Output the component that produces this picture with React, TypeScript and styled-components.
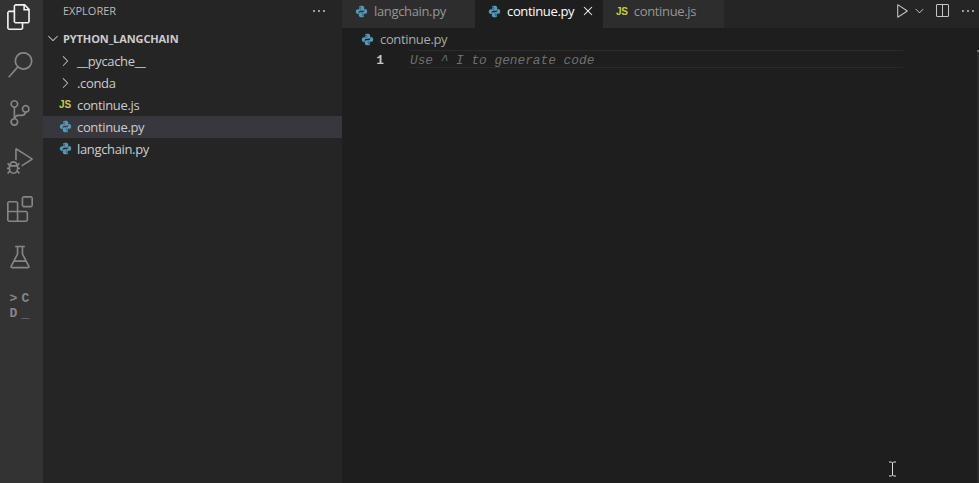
import React from "react";
import styled, { createGlobalStyle } from "styled-components";
import {
  VscFiles,
  VscSearch,
  VscSourceControl,
  VscDebugAlt,
  VscExtensions,
  VscBeaker,
  VscEllipsis,
  VscChevronRight,
  VscChevronDown,
  VscClose,
  VscPlay,
  VscSplitHorizontal,
} from "react-icons/vsc";

const GlobalStyle = createGlobalStyle`
  html, body {
    margin: 0;
    padding: 0;
    height: 100%;
    background: #1e1e1e;
    overflow: hidden;
  }
  #root {
    height: 100%;
  }
  * {
    box-sizing: border-box;
  }
`;

const Workbench = styled.div`
  display: flex;
  position: relative;
  width: 979px;
  height: 483px;
  overflow: hidden;
  font-family: "Open Sans", "Noto Sans", sans-serif;
  color: #cccccc;
`;

const ActivityBar = styled.nav`
  display: flex;
  flex-direction: column;
  align-items: center;
  flex: 0 0 43px;
  width: 43px;
  background: #333333;
`;

const ActivityItem = styled.div<{ $active?: boolean }>`
  display: flex;
  align-items: center;
  justify-content: center;
  width: 43px;
  height: 48px;
  padding-right: 4px;
  color: ${(props) => (props.$active ? "#f2f2f2" : "#868686")};
  font-size: 26px;

  &:first-child {
    height: 41px;
    padding: 0 6px 7px 0;
  }
`;

const TestingGlyph = styled.div`
  display: grid;
  grid-template-columns: 12px 12px;
  grid-template-rows: 15px 15px;
  justify-items: center;
  margin-top: 1px;
  font-family: "Liberation Mono", monospace;
  font-size: 13px;
  font-weight: 700;
  line-height: 15px;
  color: #868686;

  span {
    display: block;
  }
`;

const Sidebar = styled.aside`
  display: flex;
  flex-direction: column;
  flex: 0 0 299px;
  width: 299px;
  background: #252526;
`;

const SidebarHeader = styled.div`
  display: flex;
  align-items: center;
  justify-content: space-between;
  height: 22px;
  padding: 0 15px 1px 20px;
  font-size: 11px;
  color: #bbbbbb;
`;

const HeaderMenu = styled.span`
  display: flex;
  font-size: 16px;
  color: #c5c5c5;
`;

const FolderTitle = styled.div`
  display: flex;
  align-items: center;
  height: 22px;
  margin-top: 6px;
  padding: 0 0 2px 2px;
  gap: 2px;
  font-size: 11px;
  font-weight: 700;
  letter-spacing: -0.1px;
  color: #cccccc;

  svg {
    font-size: 16px;
    flex: none;
  }
`;

const TreeRow = styled.div<{ $selected?: boolean }>`
  display: flex;
  align-items: center;
  height: 22px;
  padding: 0 0 1px 14px;
  font-size: 13px;
  letter-spacing: -0.35px;
  color: #cccccc;
  background: ${(props) => (props.$selected ? "#37373d" : "transparent")};
`;

const TreeIcon = styled.span`
  display: flex;
  align-items: center;
  justify-content: center;
  flex: 0 0 16px;
  width: 16px;
  margin-right: 4px;
  font-size: 16px;
  color: #c5c5c5;
`;

const JsBadge = styled.span`
  font-family: "Liberation Sans", sans-serif;
  font-size: 10px;
  font-weight: 700;
  letter-spacing: -0.2px;
  color: #cbcb41;
`;

const Editor = styled.main`
  display: flex;
  flex-direction: column;
  flex: 1;
  min-width: 0;
  background: #1e1e1e;
`;

const TabBar = styled.div`
  display: flex;
  align-items: stretch;
  height: 28px;
  background: #252526;
`;

const Tab = styled.div<{ $active?: boolean; $width: number }>`
  display: flex;
  align-items: center;
  flex: 0 0 ${(props) => props.$width}px;
  padding: 0 0 6px 13px;
  gap: 6px;
  font-size: 13px;
  letter-spacing: -0.35px;
  color: ${(props) => (props.$active ? "#ffffff" : "#969696")};
  background: ${(props) => (props.$active ? "#1e1e1e" : "#2d2d2d")};
`;

const TabClose = styled.span`
  display: flex;
  font-size: 16px;
  color: #f0f0f0;
`;

const TabActions = styled.div`
  display: flex;
  align-items: center;
  margin-left: auto;
  padding: 0 3px 7px 0;
  color: #c5c5c5;
`;

const ActionIcon = styled.span<{ $size: number; $gap?: number }>`
  display: flex;
  margin-left: ${(props) => props.$gap ?? 0}px;
  font-size: ${(props) => props.$size}px;
`;

const Breadcrumb = styled.div`
  display: flex;
  align-items: center;
  height: 22px;
  padding-left: 19px;
  gap: 6px;
  font-size: 13px;
  letter-spacing: -0.35px;
  color: #a9a9a9;
`;

const CodeLine = styled.div`
  display: flex;
  align-items: center;
  height: 18px;
  font-family: "Liberation Mono", monospace;
  font-size: 12.8px;
`;

const LineNumber = styled.span`
  flex: 0 0 42px;
  padding-top: 2px;
  text-align: right;
  color: #c6c6c6;
  font-weight: 700;
`;

const LineContent = styled.div`
  display: flex;
  align-items: center;
  width: 494px;
  height: 18px;
  margin-left: 25px;
  padding: 2px 0 0 1px;
  border-top: 1px solid #2b2b2b;
  border-bottom: 1px solid #2b2b2b;
  font-style: italic;
  color: #6f6f6f;
`;

const OverviewRuler = styled.div`
  position: absolute;
  top: 50px;
  right: 0;
  bottom: 0;
  width: 2px;
  background: #2a2a2a;
  border-top: 2px solid #6e6e6e;
`;

const MouseCursor = styled.svg`
  position: absolute;
  left: 888px;
  top: 461px;
`;

function PythonIcon({ size = 13 }: { size?: number }) {
  return (
    <svg width={size} height={size} viewBox="0 0 16 16" fill="#519aba">
      <path d="M7.6 1C5 1 4.9 2.2 4.9 2.9v1.6H8v.6H3.4C2 5.1 1 6.2 1 8s1 3 2.3 3h1.2V9.4c0-1.2 1-2.2 2.2-2.2h2.8c1 0 1.8-.8 1.8-1.8V2.900C11.300 1.800 10 1 7.600 1zM6.200 2.300a.7.7 0 1 1 0 1.400.7.7 0 0 1 0-1.400z" />
      <path d="M8.400 15c2.600 0 2.700-1.200 2.700-1.900v-1.600H8v-.6h4.600C14 10.900 15 9.800 15 8s-1-3-2.300-3h-1.200v1.600c0 1.200-1 2.200-2.200 2.200H6.500c-1 0-1.800.8-1.800 1.800v2.500C4.700 14.200 6 15 8.400 15zm1.400-1.300a.7.7 0 1 1 0-1.400.7.7 0 0 1 0 1.400z" />
    </svg>
  );
}

export default function App() {
  return (
    <>
      <GlobalStyle />
      <Workbench>
        <ActivityBar>
          <ActivityItem $active>
            <VscFiles />
          </ActivityItem>
          <ActivityItem>
            <VscSearch />
          </ActivityItem>
          <ActivityItem>
            <VscSourceControl />
          </ActivityItem>
          <ActivityItem>
            <VscDebugAlt />
          </ActivityItem>
          <ActivityItem>
            <VscExtensions />
          </ActivityItem>
          <ActivityItem>
            <VscBeaker />
          </ActivityItem>
          <ActivityItem>
            <TestingGlyph>
              <span>&gt;</span>
              <span>C</span>
              <span>D</span>
              <span>_</span>
            </TestingGlyph>
          </ActivityItem>
        </ActivityBar>

        <Sidebar>
          <SidebarHeader>
            <span>EXPLORER</span>
            <HeaderMenu>
              <VscEllipsis />
            </HeaderMenu>
          </SidebarHeader>
          <FolderTitle>
            <VscChevronDown />
            <span>PYTHON_LANGCHAIN</span>
          </FolderTitle>
          <TreeRow>
            <TreeIcon>
              <VscChevronRight />
            </TreeIcon>
            <span>__pycache__</span>
          </TreeRow>
          <TreeRow>
            <TreeIcon>
              <VscChevronRight />
            </TreeIcon>
            <span>.conda</span>
          </TreeRow>
          <TreeRow>
            <TreeIcon>
              <JsBadge>JS</JsBadge>
            </TreeIcon>
            <span>continue.js</span>
          </TreeRow>
          <TreeRow $selected>
            <TreeIcon>
              <PythonIcon />
            </TreeIcon>
            <span>continue.py</span>
          </TreeRow>
          <TreeRow>
            <TreeIcon>
              <PythonIcon />
            </TreeIcon>
            <span>langchain.py</span>
          </TreeRow>
        </Sidebar>

        <Editor>
          <TabBar>
            <Tab $width={133}>
              <PythonIcon />
              <span>langchain.py</span>
            </Tab>
            <Tab $active $width={128}>
              <PythonIcon />
              <span>continue.py</span>
              <TabClose>
                <VscClose />
              </TabClose>
            </Tab>
            <Tab $width={121}>
              <JsBadge>JS</JsBadge>
              <span>continue.js</span>
            </Tab>
            <TabActions>
              <ActionIcon $size={17}>
                <VscPlay />
              </ActionIcon>
              <ActionIcon $size={13} $gap={2}>
                <VscChevronDown />
              </ActionIcon>
              <ActionIcon $size={16} $gap={8}>
                <VscSplitHorizontal />
              </ActionIcon>
              <ActionIcon $size={16} $gap={10}>
                <VscEllipsis />
              </ActionIcon>
            </TabActions>
          </TabBar>
          <Breadcrumb>
            <PythonIcon />
            <span>continue.py</span>
          </Breadcrumb>
          <CodeLine>
            <LineNumber>1</LineNumber>
            <LineContent>Use ^ I to generate code</LineContent>
          </CodeLine>
        </Editor>

        <OverviewRuler />
        <MouseCursor width="9" height="16" viewBox="0 0 9 16">
          <path d="M1 1h2.500l1 1 1-1H8M4.500 2v12M1 15h2.500l1-1 1 1H8" fill="none" stroke="#dddddd" strokeWidth="1" />
        </MouseCursor>
      </Workbench>
    </>
  );
}
